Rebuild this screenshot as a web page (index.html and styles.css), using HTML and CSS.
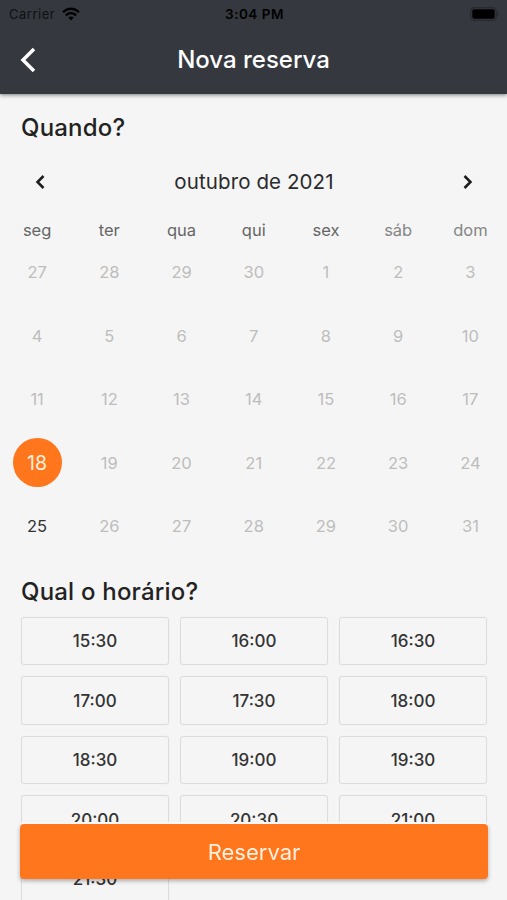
FILE: index.html
```html
<!DOCTYPE html>
<html lang="pt-BR">
<head>
<meta charset="UTF-8"/>
<meta name="viewport" content="width=device-width, initial-scale=1.0"/>
<title>Nova reserva</title>
<link rel="stylesheet" href="styles.css">
</head>
<body>

<header class="topbar">
  <div class="status">
    <div class="carrier">
      <span>Carrier</span>
      <svg class="wifi" viewBox="0 0 18 14" fill="none" stroke="#000" stroke-width="2.3">
        <path d="M1 5.2C5.5.6 12.5.6 17 5.2"/>
        <path d="M3.9 8.3C6.8 5.5 11.2 5.5 14.1 8.3"/>
        <path d="M6.3 10.6C7.9 9.2 10.1 9.2 11.7 10.6L9 13.5Z" fill="#000" stroke="none"/>
      </svg>
    </div>
    <span class="clock">3:04 PM</span>
    <svg class="battery" viewBox="0 0 30 14">
      <rect x=".7" y=".7" width="25.6" height="12.6" rx="3.6" fill="none" stroke="#27292e" stroke-width="1.2"/>
      <rect x="2.3" y="2.3" width="22.4" height="9.4" rx="2" fill="#000"/>
      <path d="M27.8 5v4c1.3-.5 1.3-3.5 0-4z" fill="#202226"/>
    </svg>
  </div>
  <div class="navbar">
    <button class="back" aria-label="Voltar">
      <svg viewBox="0 0 16 26" fill="none" stroke="#fff" stroke-width="3.5"><path d="M14 2L3 13l11 11"/></svg>
    </button>
    <h1>Nova reserva</h1>
  </div>
</header>

<main>
  <h2 class="when">Quando?</h2>
  <div class="month">
    <button aria-label="Mês anterior"><svg viewBox="0 0 10 16" fill="none" stroke="#1c1c1c" stroke-width="2.5"><path d="M8.5 2l-6 6 6 6"/></svg></button>
    <span>outubro de 2021</span>
    <button aria-label="Próximo mês"><svg viewBox="0 0 10 16" fill="none" stroke="#1c1c1c" stroke-width="2.5"><path d="M1.5 2l6 6-6 6"/></svg></button>
  </div>

  <div class="weekdays">
    <span>seg</span><span>ter</span><span>qua</span><span>qui</span><span>sex</span><span class="weekend">sáb</span><span class="weekend">dom</span>
  </div>
  <div class="days">
    <span>27</span><span>28</span><span>29</span><span>30</span><span>1</span><span>2</span><span>3</span>
    <span>4</span><span>5</span><span>6</span><span>7</span><span>8</span><span>9</span><span>10</span>
    <span>11</span><span>12</span><span>13</span><span>14</span><span>15</span><span>16</span><span>17</span>
    <span><b class="selected">18</b></span><span>19</span><span>20</span><span>21</span><span>22</span><span>23</span><span>24</span>
    <span class="available">25</span><span>26</span><span>27</span><span>28</span><span>29</span><span>30</span><span>31</span>
  </div>

  <h2 class="time">Qual o horário?</h2>
  <div class="slots">
    <button>15:30</button><button>16:00</button><button>16:30</button>
    <button>17:00</button><button>17:30</button><button>18:00</button>
    <button>18:30</button><button>19:00</button><button>19:30</button>
    <button>20:00</button><button>20:30</button><button>21:00</button>
    <button>21:30</button>
  </div>
</main>

<button class="reserve">Reservar</button>

</body>
</html>
```
FILE: styles.css
```css
*{box-sizing:border-box;margin:0;padding:0;}
body{font-family:Inter,sans-serif;background:#f5f5f5;color:#222;height:100vh;overflow:hidden;}
button{font-family:inherit;background:none;border:none;cursor:pointer;}
svg{display:block;}

.topbar{height:94px;background:#35383f;box-shadow:0 1px 4px rgba(0,0,0,0.5);}
.status{display:grid;grid-template-columns:1fr auto 1fr;align-items:center;height:27px;padding:0 7px 0 9px;color:#000;font-size:13px;}
.carrier{display:flex;align-items:center;gap:7px;color:#101113;letter-spacing:0.5px;}
.wifi{width:18px;height:14px;}
.clock{font-size:13.5px;font-weight:600;letter-spacing:0.5px;}
.battery{width:30px;height:14px;justify-self:end;}
.navbar{display:grid;grid-template-columns:60px 1fr 60px;align-items:center;height:65px;}
.navbar h1{font-size:24px;font-weight:500;color:#fff;text-align:center;}
.back{padding-left:20px;}
.back svg{width:16px;height:26px;}

h2{font-size:24px;font-weight:500;line-height:30px;letter-spacing:0.2px;padding-left:21px;}
.when{margin-top:19px;}
.time{margin-top:19.6px;}

.month{display:flex;justify-content:space-between;align-items:center;height:40px;margin-top:19px;padding:0 34px 0 35px;color:#2b2b2b;font-size:20.5px;line-height:26px;letter-spacing:0.1px;}
.month svg{width:10px;height:16px;}
.weekdays,.days{display:grid;grid-template-columns:repeat(7,1fr);padding:0 0.5px 0 1px;text-align:center;}
.weekdays{height:38.4px;align-items:end;line-height:19px;color:#666;font-size:16.5px;}
.weekdays .weekend{color:#858585;}
.days{grid-auto-rows:63.5px;color:#bdbdbd;font-size:16.5px;}
.days span{display:flex;align-items:center;justify-content:center;}
.days .available{color:#333;}
.selected{display:flex;align-items:center;justify-content:center;width:49px;height:49px;border-radius:50%;background:#ff761d;color:#fff0df;font-size:19.5px;font-weight:400;}

.slots{display:grid;grid-template-columns:repeat(3,1fr);grid-auto-rows:48.5px;gap:11px;padding:0 20px 0 21px;margin-top:9.5px;}
.slots button{border:1px solid #dcdcdc;border-radius:3px;color:#333;font-size:17px;font-weight:500;box-shadow:0 0 1px #ddd;}

.reserve{position:fixed;left:20px;right:19px;bottom:21px;height:55px;border-radius:4px;background:#ff761d;color:#fff0df;font-size:22px;box-shadow:0 -2px 0 #f8f8f8,0 2px 4px rgba(0,0,0,0.3);}
```
